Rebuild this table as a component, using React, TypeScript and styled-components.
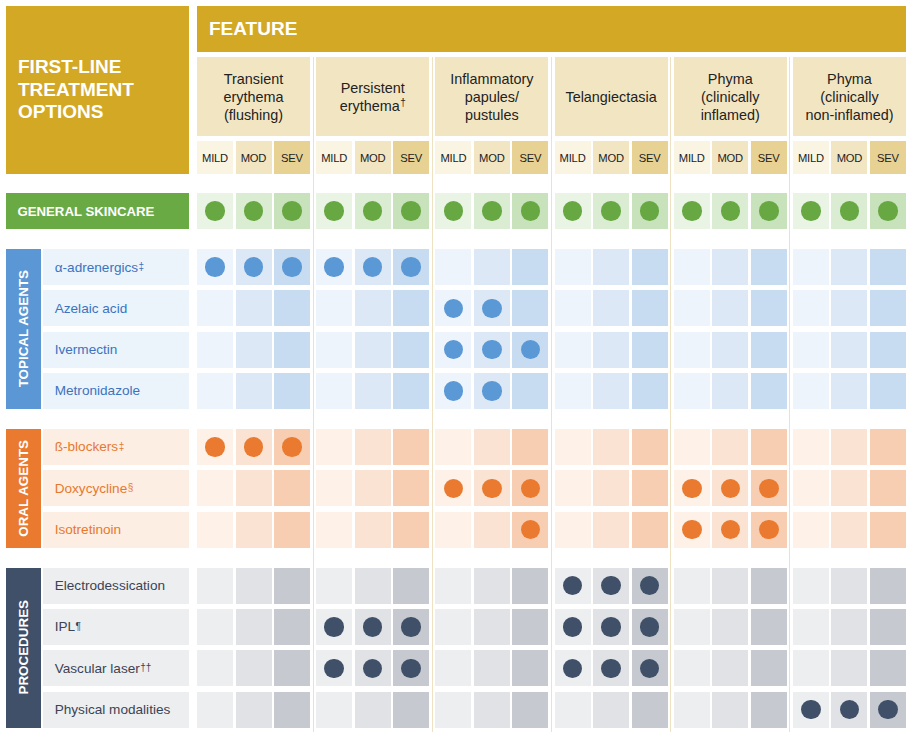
import React from "react";
import styled, { createGlobalStyle } from "styled-components";

const GlobalStyle = createGlobalStyle`
  html, body { margin: 0; padding: 0; background: #ffffff; }
  body { font-family: "Liberation Sans", Arial, Helvetica, sans-serif; }
  * { box-sizing: border-box; }
`;

type Palette = {
  label: string;
  text: string;
  name: string;
  cells: [string, string, string];
  dot: string;
};

const GOLD = "#D3A825";
const SEV_BG: [string, string, string] = ["#FAF4E3", "#F2E5C1", "#E7D193"];

const green: Palette = {
  label: "#69AA45",
  text: "#ffffff",
  name: "#69AA45",
  cells: ["#EAF4E5", "#DAECD2", "#C8E2BC"],
  dot: "#67A843",
};
const blue: Palette = {
  label: "#5B97D4",
  text: "#3B73BF",
  name: "#EBF3FB",
  cells: ["#EDF4FB", "#DCE8F6", "#C7DBF1"],
  dot: "#5A98D6",
};
const orange: Palette = {
  label: "#EA7A2F",
  text: "#E7792E",
  name: "#FDEEE4",
  cells: ["#FDF1E8", "#FBE3D4", "#F8CEB3"],
  dot: "#EA7A2F",
};
const gray: Palette = {
  label: "#3F5068",
  text: "#3B4454",
  name: "#EDEEF0",
  cells: ["#EDEEF0", "#E0E2E5", "#C6CAD0"],
  dot: "#3F5068",
};

type Row = { name: string; sup?: string; marks: string[] };
type Section = { label: string; palette: Palette; rows: Row[] };

const severities = ["MILD", "MOD", "SEV"];

const sections: Section[] = [
  {
    label: "TOPICAL AGENTS",
    palette: blue,
    rows: [
      { name: "α-adrenergics", sup: "‡", marks: ["111", "111", "000", "000", "000", "000"] },
      { name: "Azelaic acid", marks: ["000", "000", "110", "000", "000", "000"] },
      { name: "Ivermectin", marks: ["000", "000", "111", "000", "000", "000"] },
      { name: "Metronidazole", marks: ["000", "000", "110", "000", "000", "000"] },
    ],
  },
  {
    label: "ORAL AGENTS",
    palette: orange,
    rows: [
      { name: "ß-blockers", sup: "‡", marks: ["111", "000", "000", "000", "000", "000"] },
      { name: "Doxycycline", sup: "§", marks: ["000", "000", "111", "000", "111", "000"] },
      { name: "Isotretinoin", marks: ["000", "000", "001", "000", "111", "000"] },
    ],
  },
  {
    label: "PROCEDURES",
    palette: gray,
    rows: [
      { name: "Electrodessication", marks: ["000", "000", "000", "111", "000", "000"] },
      { name: "IPL", sup: "¶", marks: ["000", "111", "000", "111", "000", "000"] },
      { name: "Vascular laser", sup: "††", marks: ["000", "111", "000", "111", "000", "000"] },
      { name: "Physical modalities", marks: ["000", "000", "000", "000", "000", "111"] },
    ],
  },
];

const ROW_H = 36;
const ROW_GAP = 5.33;

/* ---------- layout ---------- */

const Page = styled.div`
  width: 909px;
  display: flex;
  gap: 8px;
  padding: 6px 0 0 6px;
`;

const LeftColumn = styled.div`
  width: 183px;
  flex-shrink: 0;
  display: flex;
  flex-direction: column;
`;

const RightColumn = styled.div`
  width: 709px;
  flex-shrink: 0;
  display: flex;
  flex-direction: column;
`;

/* ---------- left side ---------- */

const TitleBox = styled.div`
  height: 168px;
  background: ${GOLD};
  color: #ffffff;
  font-weight: 700;
  font-size: 19px;
  line-height: 22.7px;
  display: flex;
  align-items: center;
  padding-left: 12px;
`;

const SkincareLabel = styled.div`
  margin-top: 19px;
  height: ${ROW_H}px;
  background: ${green.label};
  color: #ffffff;
  font-weight: 700;
  font-size: 13.2px;
  display: flex;
  align-items: center;
  padding-left: 11.5px;
`;

const SectionBlock = styled.div`
  margin-top: 20px;
  display: flex;
  gap: 2px;
`;

const SideLabel = styled.div<{ $bg: string }>`
  width: 35px;
  flex-shrink: 0;
  background: ${(p) => p.$bg};
  display: flex;
  align-items: center;
  justify-content: center;
`;

const SideText = styled.span`
  writing-mode: vertical-rl;
  transform: rotate(180deg);
  color: #ffffff;
  font-weight: 700;
  font-size: 13.4px;
  white-space: nowrap;
`;

const NameList = styled.div`
  flex: 1;
  display: flex;
  flex-direction: column;
  gap: ${ROW_GAP}px;
`;

const NameCell = styled.div<{ $bg: string; $color: string }>`
  height: ${ROW_H}px;
  background: ${(p) => p.$bg};
  color: ${(p) => p.$color};
  font-size: 13.6px;
  display: flex;
  align-items: center;
  padding-left: 11.7px;
  white-space: nowrap;
`;

const Sup = styled.sup`
  font-size: 10px;
  vertical-align: 5px;
  line-height: 0;
  margin-left: 0.5px;
`;

/* ---------- right side ---------- */

const FeatureBar = styled.div`
  height: 46px;
  background: ${GOLD};
  color: #ffffff;
  font-weight: 700;
  font-size: 19px;
  display: flex;
  align-items: center;
  padding-left: 12px;
`;

const GroupsRow = styled.div`
  margin-top: 5px;
  display: flex;
  align-items: stretch;
`;

const Divider = styled.div`
  width: 1px;
  flex-shrink: 0;
  margin: 0 2.6px;
  background: #EFE2C3;
`;

const GroupColumn = styled.div`
  width: 113px;
  flex-shrink: 0;
  display: flex;
  flex-direction: column;
  padding-bottom: 6px;
`;

const GroupHeader = styled.div`
  height: 79px;
  background: #F2E6C2;
  color: #222222;
  font-size: 14.4px;
  line-height: 18px;
  text-align: center;
  display: flex;
  align-items: center;
  justify-content: center;
`;

const Triple = styled.div<{ $top: number; $h: number }>`
  margin-top: ${(p) => p.$top}px;
  height: ${(p) => p.$h}px;
  display: grid;
  grid-template-columns: repeat(3, 1fr);
  gap: 2.5px;
`;

const SevCell = styled.div<{ $bg: string }>`
  background: ${(p) => p.$bg};
  color: #222222;
  font-size: 11.2px;
  letter-spacing: -0.2px;
  display: flex;
  align-items: center;
  justify-content: center;
`;

const CellStack = styled.div`
  margin-top: 20px;
  display: flex;
  flex-direction: column;
  gap: ${ROW_GAP}px;
`;

const Cell = styled.div<{ $bg: string }>`
  background: ${(p) => p.$bg};
  display: flex;
  align-items: center;
  justify-content: center;
`;

const Dot = styled.span<{ $color: string }>`
  width: 19.5px;
  height: 19.5px;
  border-radius: 50%;
  background: ${(p) => p.$color};
`;

const groups: React.ReactNode[] = [
  <>Transient<br />erythema<br />(flushing)</>,
  <>Persistent<br />erythema<Sup>†</Sup></>,
  <>Inflammatory<br />papules/<br />pustules</>,
  <>Telangiectasia</>,
  <>Phyma<br />(clinically<br />inflamed)</>,
  <>Phyma<br />(clinically<br />non-inflamed)</>,
];

function CellTriple({ palette, marks, top }: { palette: Palette; marks: string; top: number }) {
  return (
    <Triple $top={top} $h={ROW_H}>
      {[0, 1, 2].map((i) => (
        <Cell key={i} $bg={palette.cells[i]}>
          {marks[i] === "1" && <Dot $color={palette.dot} />}
        </Cell>
      ))}
    </Triple>
  );
}

function Group({ index }: { index: number }) {
  return (
    <GroupColumn>
      <GroupHeader>
        <div>{groups[index]}</div>
      </GroupHeader>
      <Triple $top={5} $h={33}>
        {severities.map((s, i) => (
          <SevCell key={s} $bg={SEV_BG[i]}>
            {s}
          </SevCell>
        ))}
      </Triple>
      <CellTriple palette={green} marks="111" top={19} />
      {sections.map((sec) => (
        <CellStack key={sec.label}>
          {sec.rows.map((r) => (
            <CellTriple key={r.name} palette={sec.palette} marks={r.marks[index]} top={0} />
          ))}
        </CellStack>
      ))}
    </GroupColumn>
  );
}

export default function App() {
  return (
    <>
      <GlobalStyle />
      <Page>
        <LeftColumn>
          <TitleBox>
            <div>
              FIRST-LINE
              <br />
              TREATMENT
              <br />
              OPTIONS
            </div>
          </TitleBox>
          <SkincareLabel>GENERAL SKINCARE</SkincareLabel>
          {sections.map((sec) => (
            <SectionBlock key={sec.label}>
              <SideLabel $bg={sec.palette.label}>
                <SideText>{sec.label}</SideText>
              </SideLabel>
              <NameList>
                {sec.rows.map((r) => (
                  <NameCell key={r.name} $bg={sec.palette.name} $color={sec.palette.text}>
                    {r.name}
                    {r.sup && <Sup>{r.sup}</Sup>}
                  </NameCell>
                ))}
              </NameList>
            </SectionBlock>
          ))}
        </LeftColumn>
        <RightColumn>
          <FeatureBar>FEATURE</FeatureBar>
          <GroupsRow>
            {groups.map((_, i) => (
              <React.Fragment key={i}>
                {i > 0 && <Divider />}
                <Group index={i} />
              </React.Fragment>
            ))}
          </GroupsRow>
        </RightColumn>
      </Page>
    </>
  );
}
